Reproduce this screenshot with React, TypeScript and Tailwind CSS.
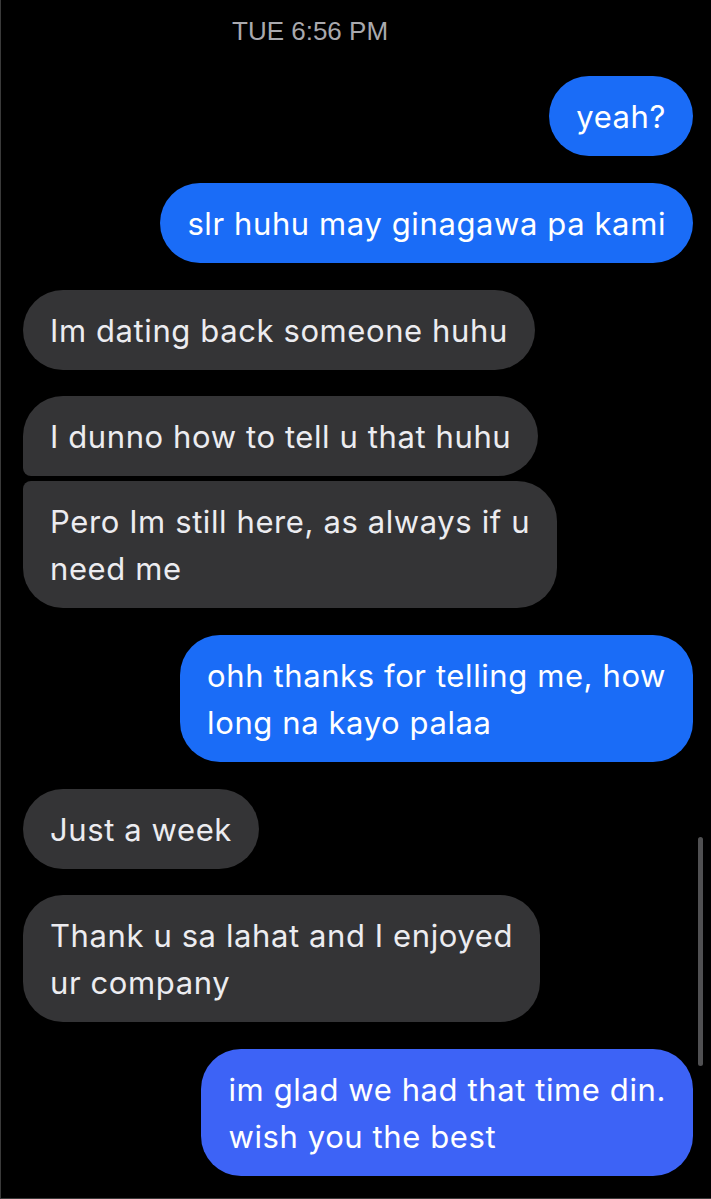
import React from "react";

type Msg = {
  lines: string[];
  me: boolean;
  color?: string;
  corner?: string;
  gap: string;
};

const messages: Msg[] = [
  { lines: ["yeah?"], me: true, gap: "mt-[30px]" },
  { lines: ["slr huhu may ginagawa pa kami"], me: true, gap: "mt-[27px]" },
  { lines: ["Im dating back someone huhu"], me: false, gap: "mt-[27px]" },
  {
    lines: ["I dunno how to tell u that huhu"],
    me: false,
    corner: "rounded-bl-[8px]",
    gap: "mt-[26px]",
  },
  {
    lines: ["Pero Im still here, as always if u", "need me"],
    me: false,
    corner: "rounded-tl-[8px]",
    gap: "mt-[5px]",
  },
  {
    lines: ["ohh thanks for telling me, how", "long na kayo palaa"],
    me: true,
    gap: "mt-[27px]",
  },
  { lines: ["Just a week"], me: false, gap: "mt-[27px]" },
  {
    lines: ["Thank u sa lahat and I enjoyed", "ur company"],
    me: false,
    gap: "mt-[26px]",
  },
  {
    lines: ["im glad we had that time din.", "wish you the best"],
    me: true,
    color: "bg-[#3d63f6]",
    gap: "mt-[27px]",
  },
];

function Bubble({ msg }: { msg: Msg }) {
  const bg = msg.me ? msg.color ?? "bg-[#1a6cf7]" : "bg-[#343436]";
  const text = msg.me ? "text-white" : "text-[#ececf0]";
  return (
    <div className={`flex ${msg.me ? "justify-end" : "justify-start"} ${msg.gap}`}>
      <div
        className={`rounded-[40px] ${msg.corner ?? ""} ${bg} ${text} px-[27px] py-[16.5px] text-[31px] leading-[47px] tracking-[0.6px]`}
      >
        {msg.lines.map((l) => (
          <div key={l} className="whitespace-nowrap">
            {l}
          </div>
        ))}
      </div>
    </div>
  );
}

export default function App() {
  return (
    <div
      className="relative w-[711px] h-[1199px] bg-black border-l border-b border-[#3a3a3a] overflow-hidden"
      style={{ fontFamily: "Inter, 'Liberation Sans', sans-serif" }}
    >
      {/* Timestamp */}
      <div className="pt-[16px] pl-[231px]">
        <span
          className="text-[26px] leading-[30px] text-[#a9a9ae]"
          style={{ fontFamily: "'Liberation Sans', Arial, sans-serif" }}
        >
          TUE 6:56 PM
        </span>
      </div>

      {/* Chat */}
      <div className="flex flex-col pl-[22px] pr-[18px]">
        {messages.map((m, i) => (
          <Bubble key={i} msg={m} />
        ))}
      </div>

      {/* Scroll indicator */}
      <div className="absolute left-[697px] top-[837px] w-[5px] h-[229px] rounded-full bg-[#505052]" />
    </div>
  );
}
